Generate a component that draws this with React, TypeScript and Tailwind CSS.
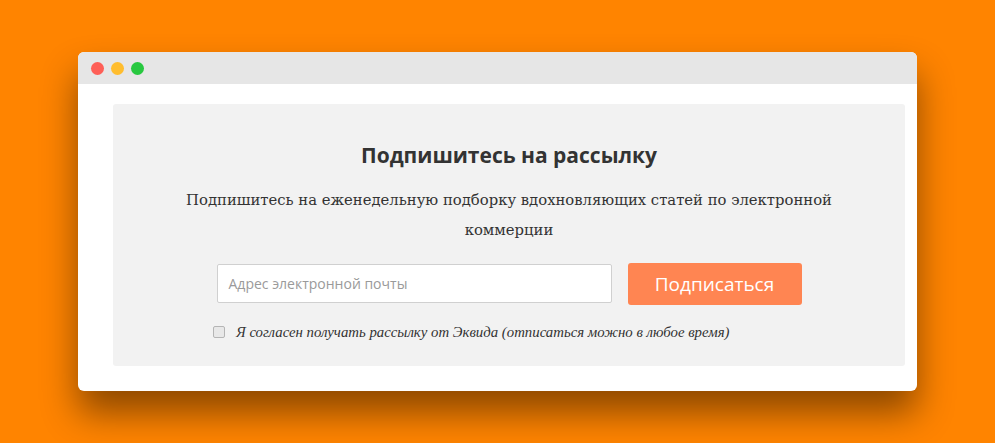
import React from "react";

export default function App() {
  return (
    <div className="w-[995px] h-[443px] bg-[#ff8400] pt-[52px] pl-[78px] overflow-hidden">
      <div className="w-[839px] h-[339px] bg-white rounded-[6px] shadow-[0_22px_36px_rgba(0,0,0,0.45)] flex flex-col overflow-hidden">
        <div className="h-[32px] bg-[#e6e6e6] flex items-center pl-[13px] gap-[7px]">
          <span className="w-[13px] h-[13px] rounded-full bg-[#fe5f57]" />
          <span className="w-[13px] h-[13px] rounded-full bg-[#ffbd2e]" />
          <span className="w-[13px] h-[13px] rounded-full bg-[#28c840]" />
        </div>
        <div className="pl-[35px] pr-[12px] pt-[20px]">
          <div className="w-[792px] h-[262px] bg-[#f2f2f2] rounded-[3px] flex flex-col items-center pt-[37px]">
            <h2 className="text-[21px] leading-[28px] font-bold text-[#333] font-['Open_Sans',sans-serif]">
              Подпишитесь на рассылку
            </h2>
            <p className="mt-[16px] w-[680px] text-center text-[14.8px] leading-[30px] text-[#333] font-['DejaVu_Serif',serif]">
              Подпишитесь на еженедельную подборку вдохновляющих статей по электронной
              <br />
              коммерции
            </p>
            <div className="mt-[19px] flex gap-[16px]">
              <div className="w-[395px] h-[39px] bg-white border border-[#d0d0d0] rounded-[2px] flex items-center pl-[11px]">
                <span className="text-[14px] text-[#9a9a9a] font-['Open_Sans',sans-serif]">
                  Адрес электронной почты
                </span>
              </div>
              <button className="w-[174px] h-[42px] -mt-[1px] bg-[#ff8552] rounded-[3px] text-white text-[19px] font-['Open_Sans',sans-serif]">
                Подписаться
              </button>
            </div>
            <div className="mt-[16px] self-start ml-[100px] flex items-center gap-[11px]">
              <span className="w-[12px] h-[12px] bg-[#e8e8e8] border border-[#b5b5b5] rounded-[2px]" />
              <span className="italic text-[14.8px] text-[#333] font-['Liberation_Serif',serif]">
                Я согласен получать рассылку от Эквида (отписаться можно в любое время)
              </span>
            </div>
          </div>
        </div>
      </div>
    </div>
  );
}
